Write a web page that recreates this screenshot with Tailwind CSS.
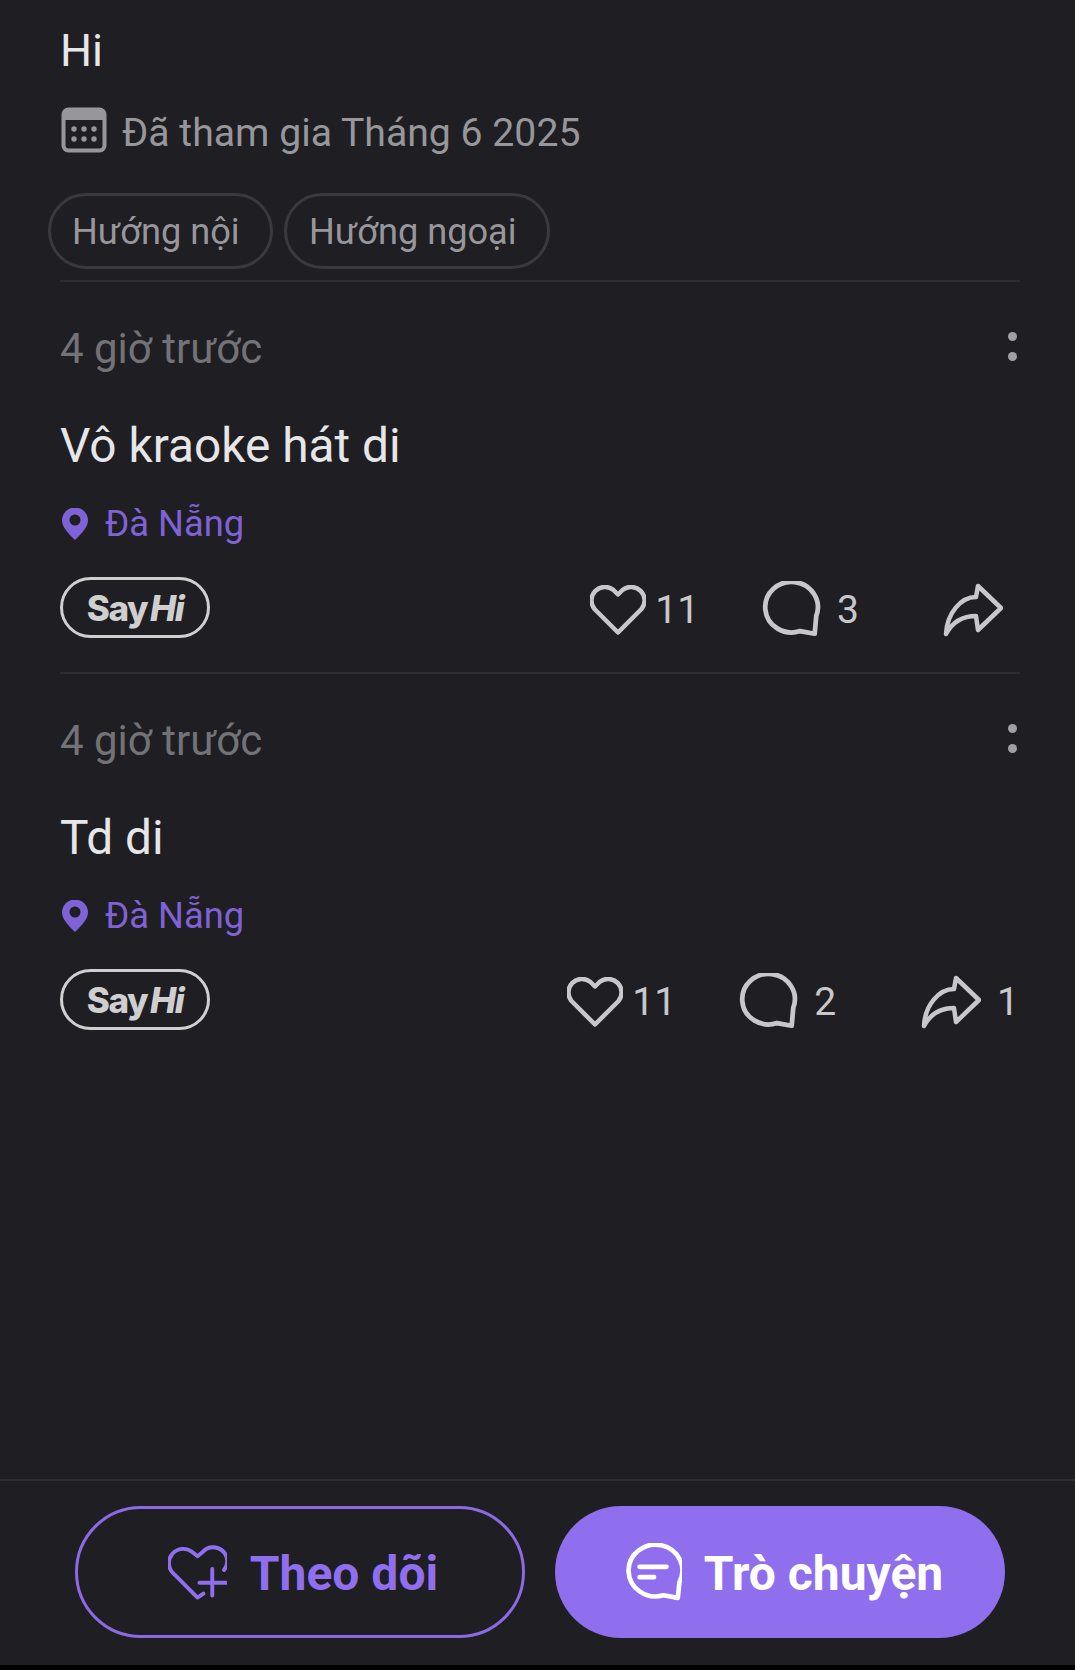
<!DOCTYPE html>
<html lang="vi">
<head>
  <meta charset="UTF-8">
  <meta name="viewport" content="width=device-width, initial-scale=1.0">
  <title>Profile</title>
  <script src="https://cdn.jsdelivr.net/npm/@tailwindcss/browser@4"></script>
</head>
<body class="bg-[#1f1e23] font-['Roboto',sans-serif] w-[1075px] h-[1670px] overflow-hidden flex flex-col">
  <main class="flex-1 pl-[60px] pr-[55px]">
    <h1 class="h-[102px] pt-[22px] text-[45px] leading-[58px] text-[#e6e6e8]">Hi</h1>
    <div class="flex items-center h-[60px] text-[#97979b] text-[39.200px]">
      <svg class="w-[48px] h-[48px] mr-[14px] -mt-[5px] shrink-0" viewBox="0 0 48 48">
        <rect x="3.500" y="3.500" width="41" height="41" rx="5" fill="none" stroke="#97979b" stroke-width="4"/>
        <path d="M3 9a6 6 0 0 1 6-6h30a6 6 0 0 1 6 6v5H3z" fill="#97979b"/>
        <g fill="#97979b"><circle cx="14" cy="23" r="2.700"/><circle cx="24" cy="23" r="2.700"/><circle cx="34" cy="23" r="2.700"/><circle cx="14" cy="33" r="2.700"/><circle cx="24" cy="33" r="2.700"/><circle cx="34" cy="33" r="2.700"/></g>
      </svg>
      <span class="pt-[2px]">Đã tham gia Tháng 6 2025</span>
    </div>
    <div class="flex gap-[11px] -ml-3 mt-[31px] mb-[11px] text-[#97979b] text-[36.200px]">
      <span class="h-[76px] w-[225px] pl-[21px] pt-[2px] flex items-center rounded-full border-[3px] border-[#3a393e]">Hướng nội</span>
      <span class="h-[76px] w-[266px] pl-[22px] pt-[2px] flex items-center rounded-full border-[3px] border-[#3a393e]">Hướng ngoại</span>
    </div>

    <article class="h-[392px] border-t-2 border-[#2f2e33]">
      <div class="flex items-center justify-between h-[134px] pb-[2px]">
        <span class="text-[42px] text-[#737377]">4 giờ trước</span>
        <span class="flex flex-col gap-[11px] mr-[3px] mb-[4px]"><i class="block w-[9px] h-[9px] rounded-full bg-[#a0a0a3]"></i><i class="block w-[9px] h-[9px] rounded-full bg-[#a0a0a3]"></i></span>
      </div>
      <p class="text-[47.800px] leading-[60px] text-[#e6e6e8]">Vô kraoke hát di</p>
      <div class="flex items-center h-[48px] mt-[24px] text-[#7f62d6] text-[36.300px]">
        <svg class="w-[26px] h-[32px] ml-[2px] mr-[17px]" viewBox="0 0 26 32"><path fill-rule="evenodd" d="M13 32C6 25 0 19 0 12.500a13 13 0 0 1 26 0C26 19 20 25 13 32zm0-14.500a5.500 5.500 0 1 0 0-11 5.500 5.500 0 0 0 0 11z" fill="#7f62d6"/></svg>
        <span>Đà Nẵng</span>
      </div>
      <div class="flex items-center justify-between mt-[29px] text-[#c8c8ca] text-[39px]">
        <span class="h-[61px] w-[150px] mb-[4px] flex items-center justify-center rounded-full border-[3px] border-[#cfcfd0] text-[#cfcfd0] font-['Inter',sans-serif] text-[35px] font-extrabold tracking-[-1.500px]"><span class="pt-[2px]">Say</span><em class="ml-[3px] pt-[2px]">Hi</em></span>
        <div class="flex items-center pr-[17px]">
          <svg class="w-[56px] h-[50px]" viewBox="0 0 56 50"><path d="M28 47.500 4.500 24A13.500 13.500 0 0 1 23.500 5L28 9.500 32.500 5A13.500 13.500 0 0 1 51.500 24z" fill="none" stroke="#c8c8ca" stroke-width="4.500" stroke-linejoin="round"/></svg>
          <span class="ml-[9px] pt-[2px]">11</span>
          <svg class="w-[60px] h-[57px] ml-[62px]" viewBox="0 0 57 54"><path d="M51 50 37 47.500A25 24 0 1 1 52.500 33z" fill="none" stroke="#c8c8ca" stroke-width="4.500" stroke-linejoin="round"/></svg>
          <span class="ml-[16px] pt-[2px]">3</span>
          <svg class="w-[60px] h-[54px] ml-[84px]" viewBox="0 0 60 54"><path d="M35 3 58 25 35 47 33 33C20 33 10 38 3 51 4 30 18 14 33 14z" fill="none" stroke="#c8c8ca" stroke-width="4.500" stroke-linejoin="round"/></svg>
        </div>
      </div>
    </article>

    <article class="h-[392px] border-t-2 border-[#2f2e33]">
      <div class="flex items-center justify-between h-[134px] pb-[2px]">
        <span class="text-[42px] text-[#737377]">4 giờ trước</span>
        <span class="flex flex-col gap-[11px] mr-[3px] mb-[4px]"><i class="block w-[9px] h-[9px] rounded-full bg-[#a0a0a3]"></i><i class="block w-[9px] h-[9px] rounded-full bg-[#a0a0a3]"></i></span>
      </div>
      <p class="text-[47.800px] leading-[60px] text-[#e6e6e8]">Td di</p>
      <div class="flex items-center h-[48px] mt-[24px] text-[#7f62d6] text-[36.300px]">
        <svg class="w-[26px] h-[32px] ml-[2px] mr-[17px]" viewBox="0 0 26 32"><path fill-rule="evenodd" d="M13 32C6 25 0 19 0 12.500a13 13 0 0 1 26 0C26 19 20 25 13 32zm0-14.500a5.500 5.500 0 1 0 0-11 5.500 5.500 0 0 0 0 11z" fill="#7f62d6"/></svg>
        <span>Đà Nẵng</span>
      </div>
      <div class="flex items-center justify-between mt-[29px] text-[#c8c8ca] text-[39px]">
        <span class="h-[61px] w-[150px] mb-[4px] flex items-center justify-center rounded-full border-[3px] border-[#cfcfd0] text-[#cfcfd0] font-['Inter',sans-serif] text-[35px] font-extrabold tracking-[-1.500px]"><span class="pt-[2px]">Say</span><em class="ml-[3px] pt-[2px]">Hi</em></span>
        <div class="flex items-center pr-[1px]">
          <svg class="w-[56px] h-[50px]" viewBox="0 0 56 50"><path d="M28 47.500 4.500 24A13.500 13.500 0 0 1 23.500 5L28 9.500 32.500 5A13.500 13.500 0 0 1 51.500 24z" fill="none" stroke="#c8c8ca" stroke-width="4.500" stroke-linejoin="round"/></svg>
          <span class="ml-[9px] pt-[2px]">11</span>
          <svg class="w-[60px] h-[57px] ml-[62px]" viewBox="0 0 57 54"><path d="M51 50 37 47.500A25 24 0 1 1 52.500 33z" fill="none" stroke="#c8c8ca" stroke-width="4.500" stroke-linejoin="round"/></svg>
          <span class="ml-[16px] pt-[2px]">2</span>
          <svg class="w-[60px] h-[54px] ml-[85px]" viewBox="0 0 60 54"><path d="M35 3 58 25 35 47 33 33C20 33 10 38 3 51 4 30 18 14 33 14z" fill="none" stroke="#c8c8ca" stroke-width="4.500" stroke-linejoin="round"/></svg>
          <span class="ml-[16px] pt-[2px]">1</span>
        </div>
      </div>
    </article>
  </main>

  <footer class="h-[186px] border-t-2 border-[#2f2e33] flex gap-[30px] pl-[75px] pt-[25px] text-[48px] font-bold">
    <button class="w-[450px] h-[132px] pl-[6px] shrink-0 flex items-center justify-center rounded-full border-[3px] border-[#8a6be3] text-[#8f6fee]">
      <svg class="w-[59px] h-[56px] mr-[23px]" viewBox="0 0 60 56" fill="none" stroke="#8f6fee" stroke-width="4" stroke-linecap="round" stroke-linejoin="round"><path d="M36 50 30 54 6 30A14 14 0 0 1 25 8L30 12 35 8A14 14 0 0 1 57 26"/><path d="M45 25V52M32 39H59"/></svg>
      <span class="mt-[4px]">Theo dõi</span>
    </button>
    <button class="w-[450px] h-[132px] pl-[5px] shrink-0 flex items-center justify-center rounded-full bg-[#8f6fee] text-white">
      <svg class="w-[60px] h-[58px] mr-[22px]" viewBox="0 0 58 56" fill="none" stroke="#fff" stroke-width="4.500" stroke-linecap="round" stroke-linejoin="round"><path d="M54 53 40 50.500A26 25 0 1 1 55.500 38z"/><path d="M17 23H43M17 33H31"/></svg>
      <span class="mt-[4px]">Trò chuyện</span>
    </button>
  </footer>
  <div class="h-[5px] bg-black"></div>
</body>
</html>
